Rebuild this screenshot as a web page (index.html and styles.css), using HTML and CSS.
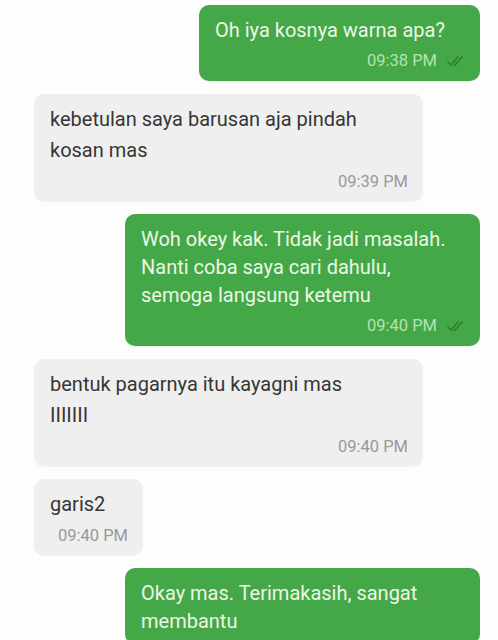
FILE: index.html
```html
<!DOCTYPE html>
<html lang="id">
<head>
    <meta charset="UTF-8">
    <meta name="viewport" content="width=device-width, initial-scale=1.0">
    <title>Chat</title>
    <link rel="stylesheet" href="styles.css">
</head>
<body>
    <div class="chat">

        <!-- Outgoing -->
        <div class="bubble out">
            <div class="text">Oh iya kosnya warna apa?</div>
            <div class="meta">
                <span class="time">09:38 PM</span>
                <svg class="ticks" viewBox="0 0 18 12" width="18" height="12"><path d="M1 7l3 3 7-8M7 10l1 0 7-8"/></svg>
            </div>
        </div>

        <!-- Incoming -->
        <div class="bubble in wide">
            <div class="text">kebetulan saya barusan aja pindah kosan mas</div>
            <div class="meta"><span class="time">09:39 PM</span></div>
        </div>

        <div class="bubble out wide">
            <div class="text">Woh okey kak. Tidak jadi masalah. Nanti coba saya cari dahulu, semoga langsung ketemu</div>
            <div class="meta">
                <span class="time">09:40 PM</span>
                <svg class="ticks" viewBox="0 0 18 12" width="18" height="12"><path d="M1 7l3 3 7-8M7 10l1 0 7-8"/></svg>
            </div>
        </div>

        <div class="bubble in wide">
            <div class="text">bentuk pagarnya itu kayagni mas<br>IIIIIII</div>
            <div class="meta"><span class="time">09:40 PM</span></div>
        </div>

        <div class="bubble in">
            <div class="text">garis2</div>
            <div class="meta"><span class="time">09:40 PM</span></div>
        </div>

        <div class="bubble out wide">
            <div class="text">Okay mas. Terimakasih, sangat membantu</div>
        </div>

    </div>
</body>
</html>
```

FILE: styles.css
```css
body {
    margin: 0;
    background: #fdfdfd;
    font-family: Roboto, "Liberation Sans", Arial, sans-serif;
}
.chat {
    display: flex;
    flex-direction: column;
    gap: 13px;
    padding: 5px 0 20px;
}
.bubble {
    box-sizing: border-box;
    border-radius: 10px;
    padding: 10px 15px 9px 16px;
    font-size: 20px;
    box-shadow: 0 1px 1px rgba(0, 0, 0, 0.05);
}
.text {
    overflow-wrap: break-word;
}
.meta {
    display: flex;
    justify-content: flex-end;
    align-items: center;
    gap: 10px;
    height: 22px;
    font-size: 16.5px;
}
.ticks {
    fill: none;
    stroke-width: 1.7;
    stroke-linecap: round;
    stroke-linejoin: round;
}

/* incoming */
.in {
    align-self: flex-start;
    margin-left: 34px;
    min-width: 109px;
    background: #efefef;
    color: #363636;
    line-height: 31px;
}
.in.wide {
    width: 389px;
}
.in .meta {
    margin-top: 4px;
    color: #999;
}

/* outgoing */
.out {
    align-self: flex-end;
    margin-right: 18px;
    min-width: 281px;
    padding-top: 11px;
    background: #44a849;
    color: #ebf7e4;
    line-height: 28px;
}
.out.wide {
    width: 355px;
}
.out .meta {
    margin-top: 6px;
    color: #b6e2b0;
}
.out .ticks {
    stroke: #2c8032;
}
```
